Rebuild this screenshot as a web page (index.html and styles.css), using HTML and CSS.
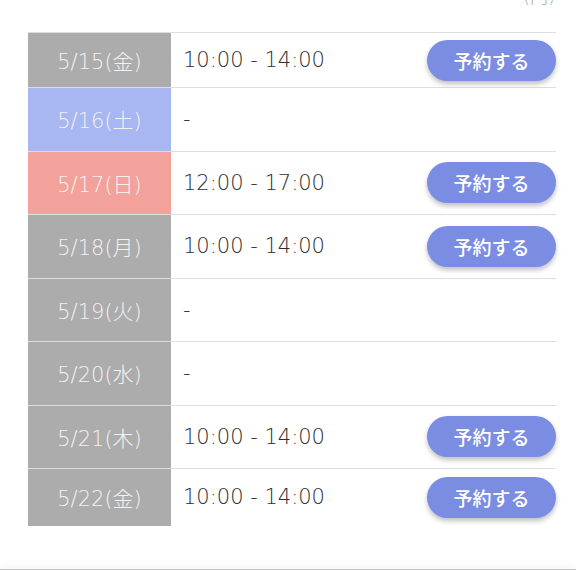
FILE: index.html
```
<!DOCTYPE html>
<html lang="ja">
<head>
  <meta charset="UTF-8">
  <title>予約スケジュール</title>
  <link rel="stylesheet" href="styles.css">
</head>

<body>

<div class="unit">(円)</div>

<table class="schedule">
  <tr class="first">
    <td class="date">5/15(金)</td>
    <td class="time">10:00 - 14:00</td>
    <td class="action"><button class="reservebtn">予約する</button></td>
  </tr>
  <tr>
    <td class="date sat">5/16(土)</td>
    <td class="time">-</td>
    <td class="action"></td>
  </tr>
  <tr>
    <td class="date sun">5/17(日)</td>
    <td class="time">12:00 - 17:00</td>
    <td class="action"><button class="reservebtn">予約する</button></td>
  </tr>
  <tr>
    <td class="date">5/18(月)</td>
    <td class="time">10:00 - 14:00</td>
    <td class="action"><button class="reservebtn">予約する</button></td>
  </tr>
  <tr>
    <td class="date">5/19(火)</td>
    <td class="time">-</td>
    <td class="action"></td>
  </tr>
  <tr>
    <td class="date">5/20(水)</td>
    <td class="time">-</td>
    <td class="action"></td>
  </tr>
  <tr>
    <td class="date">5/21(木)</td>
    <td class="time">10:00 - 14:00</td>
    <td class="action"><button class="reservebtn">予約する</button></td>
  </tr>
  <tr class="last">
    <td class="date">5/22(金)</td>
    <td class="time">10:00 - 14:00</td>
    <td class="action"><button class="reservebtn">予約する</button></td>
  </tr>
</table>

<div class="footer"></div>

</body>
</html>
```

FILE: styles.css
```
body {
  font-family: "DejaVu Sans", "Noto Sans CJK JP", sans-serif;
  background-color: #ffffff;
  color: #333;
  margin: 0;
  padding: 0;
  overflow: hidden;
}

.unit {
  text-align: right;
  padding-right: 21px;
  font-size: 18px;
  font-weight: 300;
  line-height: 20px;
  height: 20px;
  margin-top: -13px;
  color: #aaa;
}

.schedule {
  width: 528px;
  margin: 25px 0 0 28px;
  border-collapse: collapse;
}

.schedule tr {
  height: 63.5px;
}

.schedule tr.first {
  height: 55px;
}

.schedule tr.last {
  height: 57px;
}

.schedule td {
  padding: 0;
  border-top: 1px solid #dddddd;
  vertical-align: middle;
}

td.date {
  width: 143px;
  background-color: #acacac;
  color: #f2f2f2;
  text-align: center;
  font-size: 21px;
  font-weight: 300;
}

td.date.sat {
  background-color: #a8b6f1;
}

td.date.sun {
  background-color: #f3a29b;
}

td.time {
  padding-left: 12px;
  font-size: 21px;
  font-weight: 300;
  color: #2e2e2e;
}

td.action {
  text-align: right;
}

button.reservebtn {
  width: 129px;
  height: 41px;
  border: none;
  border-radius: 21px;
  background-color: #7a8de2;
  color: #ffffff;
  font-family: "Noto Sans CJK JP", sans-serif;
  font-size: 19px;
  font-weight: 500;
  box-shadow: 0 3px 5px rgba(0, 0, 0, 0.25);
  cursor: pointer;
}

.footer {
  margin-top: 43px;
  height: 10px;
  border-top: 1px solid #c4c4c4;
  box-shadow: 0 -3px 8px rgba(0, 0, 0, 0.04);
}
```
